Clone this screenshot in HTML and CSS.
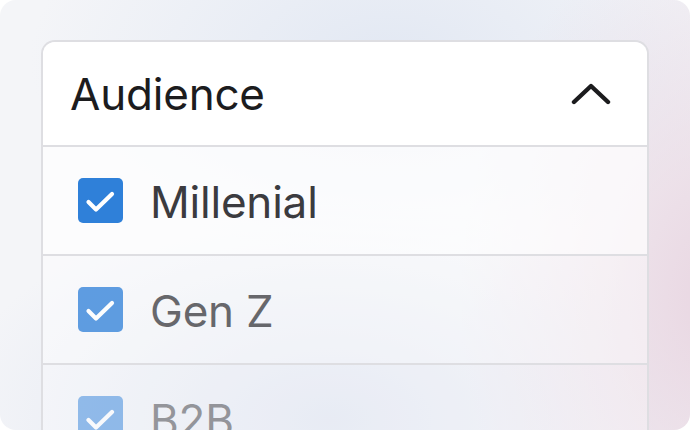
FILE: index.html
```html
<!DOCTYPE html>
<html>
<head>
<meta charset="utf-8">
<link rel="stylesheet" href="styles.css">
</head>
<body>
<div class="frame">
  <div class="card">
    <div class="header">
      <span class="title">Audience</span>
      <svg class="chevron" width="40" height="24" viewBox="0 0 40 24"><path d="M3 20 L20 4 L37 20" fill="none" stroke="#1c1c1e" stroke-width="4.4" stroke-linecap="round" stroke-linejoin="round"/></svg>
    </div>
    <div class="row row1">
      <span class="box"><svg width="45" height="45" viewBox="0 0 45 45"><path d="M10.5 24 L18 31.5 L34 16" fill="none" stroke="#fff" stroke-width="4.2" stroke-linecap="round" stroke-linejoin="round"/></svg></span>
      <span class="label">Millenial</span>
    </div>
    <div class="row row2">
      <span class="box"><svg width="45" height="45" viewBox="0 0 45 45"><path d="M10.5 24 L18 31.5 L34 16" fill="none" stroke="#fff" stroke-width="4.2" stroke-linecap="round" stroke-linejoin="round"/></svg></span>
      <span class="label">Gen Z</span>
    </div>
    <div class="row row3">
      <span class="box"><svg width="45" height="45" viewBox="0 0 45 45"><path d="M10.5 24 L18 31.5 L34 16" fill="none" stroke="#fff" stroke-width="4.2" stroke-linecap="round" stroke-linejoin="round"/></svg></span>
      <span class="label">B2B</span>
    </div>
  </div>
</div>
</body>
</html>
```
FILE: styles.css
```css
html, body {
  margin: 0;
  padding: 0;
  background: #ffffff;
}
body {
  font-family: "Inter", "Liberation Sans", sans-serif;
}
.frame {
  width: 690px;
  height: 430px;
  box-sizing: border-box;
  border-radius: 16px;
  overflow: hidden;
  padding: 40px 41px 0 41px;
  background:
    radial-gradient(ellipse 260px 380px at 720px 300px, rgba(232, 212, 224, 0.95), rgba(232, 212, 224, 0) 100%),
    radial-gradient(ellipse 360px 200px at 390px 60px, rgba(226, 232, 243, 1), rgba(226, 232, 243, 0) 100%),
    radial-gradient(ellipse 380px 220px at 330px 420px, rgba(222, 227, 240, 1), rgba(222, 227, 240, 0) 100%),
    #f4f5f8;
}
.card {
  border: 2px solid #dedee2;
  border-bottom: none;
  border-radius: 14px 14px 0 0;
  overflow: hidden;
  height: 420px;
}
.header {
  height: 103px;
  background: #ffffff;
  display: flex;
  align-items: center;
  justify-content: space-between;
  padding: 0 36px 0 27px;
  border-bottom: 2px solid #dedee2;
}
.title {
  font-size: 44px;
  color: #1c1c1e;
  letter-spacing: -0.2px;
}
.chevron {
  display: block;
  margin-top: 1px;
}
.row {
  height: 107px;
  display: flex;
  align-items: center;
  padding-left: 35px;
  gap: 27px;
  border-bottom: 2px solid #dedee2;
}
.row1 { background: rgba(255, 255, 255, 0.72); }
.row2 { background: rgba(255, 255, 255, 0.45); }
.row3 { background: rgba(255, 255, 255, 0.3); }
.row2 .box, .row2 .label { opacity: 0.76; }
.row3 .box, .row3 .label { opacity: 0.5; }
.box {
  width: 45px;
  height: 45px;
  border-radius: 5px;
  background: #2f80d9;
  display: block;
  flex: none;
}
.box svg { display: block; }
.label {
  font-size: 44px;
  color: #3b3b3f;
  letter-spacing: -0.2px;
  margin-top: 2px;
}
```
